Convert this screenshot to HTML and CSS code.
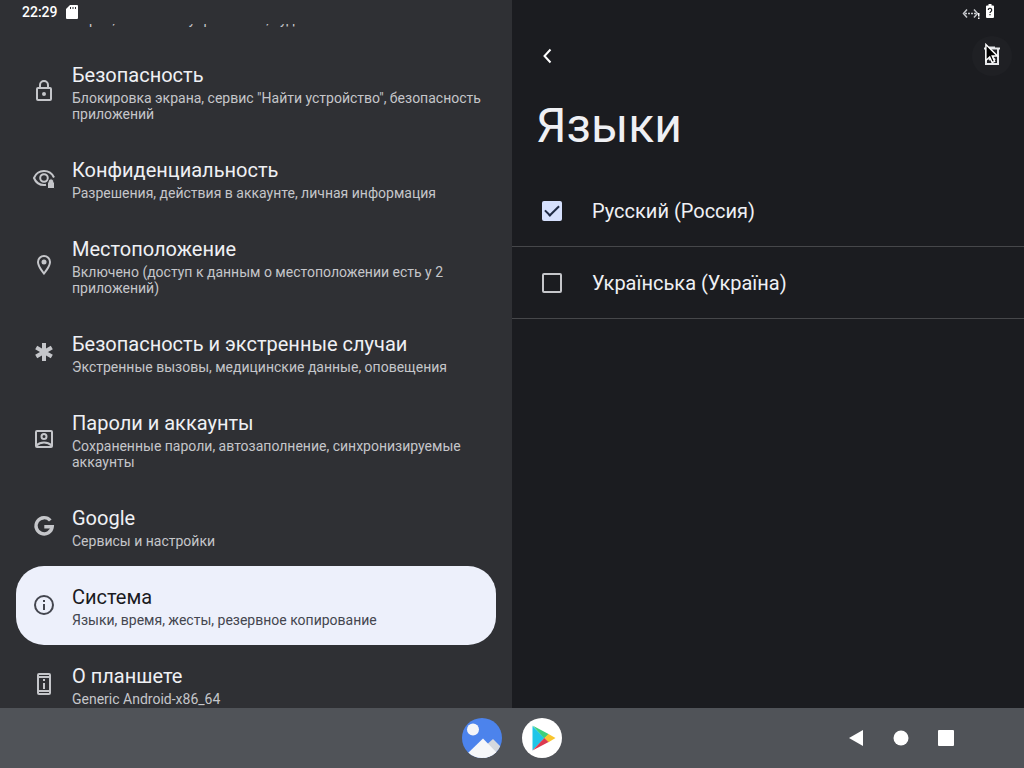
FILE: index.html
```html
<!DOCTYPE html>
<html lang="ru">
<head>
<meta charset="utf-8">
<meta name="viewport" content="width=device-width, initial-scale=1">
<title>Языки</title>
<link rel="stylesheet" href="styles.css">
</head>
<body>
<div class="screen">
  <div class="panes">
    <section class="pane pane-menu">
      <header class="status">
        <span class="clock">22:29</span>
        <svg class="sd" viewBox="0 0 12 14" aria-hidden="true"><path fill="#fff" fill-rule="evenodd" d="M4 0h7a1 1 0 0 1 1 1v12a1 1 0 0 1-1 1H1a1 1 0 0 1-1-1V4zM4 2v2h1V2zM6.500 2v2h1V2zM9 2v2h1V2z"/></svg>
      </header>
      <nav class="viewport">
        <ul class="menu">
          <li><a class="item" href="#">
            <svg class="icon" viewBox="0 0 24 24" aria-hidden="true"></svg>
            <span class="text"><span class="title">Спец. возможности</span><span class="sub">Экран, элементы управления, аудио</span></span>
          </a></li>
          <li><a class="item" href="#">
            <svg class="icon" viewBox="0 0 24 24" aria-hidden="true"><path fill="currentColor" d="M18 8h-1V6A5 5 0 0 0 7 6v2H6a2 2 0 0 0-2 2v10a2 2 0 0 0 2 2h12a2 2 0 0 0 2-2V10a2 2 0 0 0-2-2zM9 6a3 3 0 0 1 6 0v2H9zm9 14H6V10h12zm-6-3a2 2 0 1 0 0-4 2 2 0 0 0 0 4z"/></svg>
            <span class="text"><span class="title">Безопасность</span><span class="sub">Блокировка экрана, сервис "Найти устройство", безопасность приложений</span></span>
          </a></li>
          <li><a class="item" href="#">
            <svg class="icon" viewBox="0 0 24 24" aria-hidden="true"><g fill="none" stroke="currentColor" stroke-width="2"><path d="M14 18.800Q13 19 12 19C7.500 19 3.700 16.200 2 12 3.700 7.800 7.500 5 12 5c4.600 0 8.200 2.600 10 6.500"/><circle cx="12" cy="12" r="3.800"/></g><path fill="currentColor" stroke="#2f3034" d="M15.500 22.500v-6.300h.8v-.7a2.700 2.700 0 0 1 5.400 0v.7h.8v6.300z"/></svg>
            <span class="text"><span class="title">Конфиденциальность</span><span class="sub">Разрешения, действия в аккаунте, личная информация</span></span>
          </a></li>
          <li><a class="item" href="#">
            <svg class="icon" viewBox="0 0 24 24" aria-hidden="true"><path fill="currentColor" d="M12 2a7 7 0 0 0-7 7c0 5.250 7 13 7 13s7-7.750 7-13a7 7 0 0 0-7-7zM7 9a5 5 0 0 1 10 0c0 2.880-2.880 7.190-5 9.880C9.920 16.210 7 11.850 7 9z"/><circle fill="currentColor" cx="12" cy="9" r="2.500"/></svg>
            <span class="text"><span class="title">Местоположение</span><span class="sub">Включено (доступ к данным о местоположении есть у 2 приложений)</span></span>
          </a></li>
          <li><a class="item" href="#">
            <svg class="icon" viewBox="0 0 24 24" aria-hidden="true"><path stroke="currentColor" stroke-width="4" d="M12 3v18M4.200 7.500l15.600 9M4.200 16.500l15.600-9"/></svg>
            <span class="text"><span class="title">Безопасность и экстренные случаи</span><span class="sub">Экстренные вызовы, медицинские данные, оповещения</span></span>
          </a></li>
          <li><a class="item" href="#">
            <svg class="icon" viewBox="0 0 24 24" aria-hidden="true"><g fill="none" stroke="currentColor" stroke-width="2"><rect x="4" y="4" width="16" height="16" rx="1"/><circle cx="12" cy="9.500" r="2.500"/><path d="M4.500 18.500c2-2 4.500-3 7.500-3s5.500 1 7.500 3"/></g></svg>
            <span class="text"><span class="title">Пароли и аккаунты</span><span class="sub">Сохраненные пароли, автозаполнение, синхронизируемые аккаунты</span></span>
          </a></li>
          <li><a class="item" href="#">
            <svg class="icon" viewBox="0 0 24 24" aria-hidden="true"><path fill="none" stroke="currentColor" stroke-width="3.400" d="M18.300 6.500A8.100 8.100 0 1 0 20.200 12.700H12.300"/></svg>
            <span class="text"><span class="title">Google</span><span class="sub">Сервисы и настройки</span></span>
          </a></li>
          <li><a class="item selected" href="#" aria-current="page">
            <svg class="icon" viewBox="0 0 24 24" aria-hidden="true"><circle fill="none" stroke="currentColor" stroke-width="2" cx="12" cy="12" r="9"/><path fill="currentColor" d="M11 7h2v2h-2zM11 11h2v6h-2z"/></svg>
            <span class="text"><span class="title">Система</span><span class="sub">Языки, время, жесты, резервное копирование</span></span>
          </a></li>
          <li><a class="item" href="#">
            <svg class="icon" viewBox="0 0 24 24" aria-hidden="true"><path fill="currentColor" fill-rule="evenodd" d="M7 1h10a2 2 0 0 1 2 2v18a2 2 0 0 1-2 2H7a2 2 0 0 1-2-2V3a2 2 0 0 1 2-2zM7 3v1h10V3zM7 6v12h10V6zM7 20v1h10v-1zM11 7h2v2h-2zM11 11h2v6h-2z"/></svg>
            <span class="text"><span class="title">О планшете</span><span class="sub">Generic Android-x86_64</span></span>
          </a></li>
        </ul>
      </nav>
    </section>
    <main class="pane pane-main">
      <header class="status status-end">
        <svg class="net" viewBox="0 0 18 12" aria-hidden="true"><g fill="none" stroke="#c4c6ca" stroke-width="1.500"><path d="M5 2.500L1.500 6.500 5 10.500M12 2.500l3.500 4-3.500 4"/><path stroke-dasharray="2 1" d="M3 6.500h11"/></g><path fill="#fff" d="M16 6h1.500v3.500H16zM16 10.500h1.500V12H16z"/></svg>
        <svg class="battery" viewBox="0 0 8 14" aria-hidden="true"><path fill="#fff" d="M2.500 0h3v1.500H7a1 1 0 0 1 1 1V13a1 1 0 0 1-1 1H1a1 1 0 0 1-1-1V2.500a1 1 0 0 1 1-1h1.500z"/><path fill="none" stroke="#1b1c20" stroke-width="1.200" d="M2.300 6a1.700 1.700 0 1 1 2.600 1.400Q4 8 4 9M4 10v1.300"/></svg>
      </header>
      <div class="toolbar">
        <button class="tool" type="button" aria-label="Назад"><svg class="icon" viewBox="0 0 24 24"><path fill="none" stroke="#fff" stroke-width="2" d="M14.500 5.500L8.500 12l6 6.500"/></svg></button>
        <button class="tool hover" type="button" aria-label="Удалить"><svg class="icon" viewBox="0 0 24 24"><path fill="none" stroke="#e6e7ea" stroke-width="2" d="M4 4.500h16M9 3.500h6M6 5v15h12V5M9 10l6 6M15 10l-6 6"/></svg>
          <svg class="cursor" viewBox="0 0 14 21" aria-hidden="true"><path fill="#000" stroke="#fff" stroke-width="1.400" d="M.9 1.500v16l3.800-3.500 2.500 5.500 2.400-1-2.400-5.500h5.200z"/></svg></button>
      </div>
      <h1 class="heading">Языки</h1>
      <div class="langs">
        <label class="lang"><input class="check" type="checkbox" checked><span>Русский (Россия)</span></label>
        <label class="lang"><input class="check" type="checkbox"><span>Українська (Україна)</span></label>
      </div>
    </main>
  </div>
  <footer class="taskbar">
    <div class="apps">
      <button class="app" type="button" aria-label="Галерея"><svg viewBox="0 0 40 40"><defs><clipPath id="disc"><circle cx="20" cy="20" r="20"/></clipPath></defs><g clip-path="url(#disc)"><path fill="#4c83ec" d="M0 0h40v40H0z"/><circle fill="#f4f5f8" cx="11" cy="11.500" r="6"/><path fill="#d5d8de" d="M22 29l9-8 10 10v9H22z"/><path fill="#f6f7f9" d="M4 37l17-16.500L37 37v3H4z"/></g></svg></button>
      <button class="app" type="button" aria-label="Play Маркет"><svg viewBox="0 0 40 40"><circle fill="#fff" cx="20" cy="20" r="20"/><path fill="#20c5e8" d="M10.500 8v24.500L22.500 20z"/><path fill="#3ed07c" d="M10.500 7.500L27 16.200 22.400 20.400z"/><path fill="#f9c52e" d="M26.500 16l7 4-7 4.200-4.200-4.200z"/><path fill="#dc3a50" d="M10.500 32.500L26.600 24.100 22.300 19.900z"/></svg></button>
    </div>
    <div class="keys">
      <button class="key" type="button" aria-label="Назад"><svg viewBox="0 0 16 16"><path fill="#fff" d="M15 0v16L1 8z"/></svg></button>
      <button class="key" type="button" aria-label="Домой"><svg viewBox="0 0 16 16"><circle fill="#fff" cx="8" cy="8" r="7.500"/></svg></button>
      <button class="key" type="button" aria-label="Обзор"><svg viewBox="0 0 16 16"><rect fill="#fff" width="16" height="16" rx="1"/></svg></button>
    </div>
  </footer>
</div>
</body>
</html>
```
FILE: styles.css
```css
* { box-sizing: border-box; }
body { margin: 0; background: #1b1c20; font-family: Roboto, "Noto Sans", sans-serif; color: #eff0f4; }
button { border: 0; padding: 0; background: none; color: inherit; font: inherit; }
svg { display: block; }

.screen { display: flex; flex-direction: column; height: 100vh; overflow: hidden; }
.panes { flex: 1; min-height: 0; display: grid; grid-template-columns: 1fr 1fr; }
.pane { display: flex; flex-direction: column; min-height: 0; min-width: 0; }
.pane-menu { background: #2f3034; }
.pane-main { background: #1b1c20; }

.status { flex: none; display: flex; align-items: center; gap: 8px; height: 24px; padding: 0 22px; }
.status-end { justify-content: flex-end; gap: 6px; padding-right: 30px; }
.clock { font-size: 14px; font-weight: 500; line-height: 24px; color: #fff; }
.sd { width: 12px; height: 14px; }
.net { width: 18px; height: 12px; margin-top: 2px; }
.battery { width: 8px; height: 14px; margin-bottom: 2px; }

.viewport { flex: 1; min-height: 0; overflow: hidden; padding: 0 16px; }
.menu { list-style: none; margin: -59px 0 0; padding: 0; }
.item { display: flex; align-items: center; gap: 16px; padding: 15px 0 17px 16px; border-radius: 28px; color: #c5c6ca; text-decoration: none; }
.icon { flex: none; width: 24px; height: 24px; }
.text { display: flex; flex-direction: column; gap: 3px; padding-top: 4px; }
.title { font-size: 20px; line-height: 24px; color: #eff0f4; }
.sub { font-size: 14px; line-height: 16px; }
.selected { background: #edf0fb; color: #44464f; }
.selected .title { color: #1b1b1f; }

.toolbar { display: flex; justify-content: space-between; padding: 12px 12px 0 16px; }
.tool { position: relative; display: grid; place-items: center; width: 40px; height: 40px; border-radius: 20px; }
.hover { background: #1f2024; }
.cursor { position: absolute; left: 13px; top: 7px; width: 14px; height: 21px; }
.heading { margin: 20px 24px 19px; font-size: 48px; line-height: 60px; font-weight: 400; }

.lang { display: flex; align-items: center; gap: 30px; height: 72px; padding: 0 30px; border-bottom: 1px solid #46474a; font-size: 20px; }
.check { appearance: none; width: 20px; height: 20px; margin: 0; border: 2px solid #c5c6ca; border-radius: 2px; }
.check:checked { border: 0; background: #d6e0fd; display: grid; place-items: center; }
.check:checked::after { content: ""; width: 12px; height: 6px; margin-bottom: 4px; border: solid #1f2a44; border-width: 0 0 2px 2px; transform: rotate(-45deg); }

.taskbar { flex: none; display: grid; grid-template-columns: 1fr auto 1fr; align-items: center; height: 60px; background: #505358; }
.apps { grid-column: 2; display: flex; gap: 20px; }
.app { width: 40px; height: 40px; }
.keys { display: flex; justify-content: flex-end; gap: 29px; padding-right: 70px; }
.key { width: 16px; height: 16px; }
```
